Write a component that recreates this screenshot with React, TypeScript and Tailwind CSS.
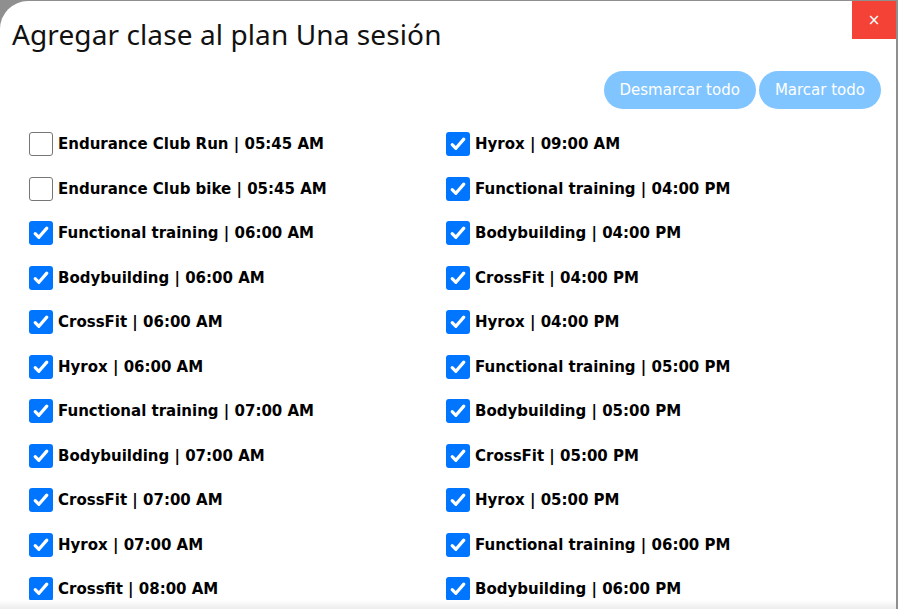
import { useState } from "react";

const left = [
    { label: "Endurance Club Run | 05:45 AM", on: false },
    { label: "Endurance Club bike | 05:45 AM", on: false },
    { label: "Functional training | 06:00 AM", on: true },
    { label: "Bodybuilding | 06:00 AM", on: true },
    { label: "CrossFit | 06:00 AM", on: true },
    { label: "Hyrox | 06:00 AM", on: true },
    { label: "Functional training | 07:00 AM", on: true },
    { label: "Bodybuilding | 07:00 AM", on: true },
    { label: "CrossFit | 07:00 AM", on: true },
    { label: "Hyrox | 07:00 AM", on: true },
    { label: "Crossfit | 08:00 AM", on: true },
];

const right = [
    { label: "Hyrox | 09:00 AM", on: true },
    { label: "Functional training | 04:00 PM", on: true },
    { label: "Bodybuilding | 04:00 PM", on: true },
    { label: "CrossFit | 04:00 PM", on: true },
    { label: "Hyrox | 04:00 PM", on: true },
    { label: "Functional training | 05:00 PM", on: true },
    { label: "Bodybuilding | 05:00 PM", on: true },
    { label: "CrossFit | 05:00 PM", on: true },
    { label: "Hyrox | 05:00 PM", on: true },
    { label: "Functional training | 06:00 PM", on: true },
    { label: "Bodybuilding | 06:00 PM", on: true },
];

const Box = ({ checked, onClick }: { checked: boolean; onClick: () => void }) => (
    <span
        onClick={onClick}
        className={
            checked
                ? "flex h-6 w-6 shrink-0 items-center justify-center rounded-[3px] bg-[#0075ff]"
                : "flex h-6 w-6 shrink-0 items-center justify-center rounded-[3px] border border-[#767676] bg-white"
        }
    >
        {checked && (
            <svg width="18" height="18" viewBox="0 0 18 18">
                <path d="M3.2 9.6l3.7 3.7 7.9-9.2" fill="none" stroke="#fff" strokeWidth="3.2" strokeLinecap="round" strokeLinejoin="round" />
            </svg>
        )}
    </span>
);

export default function App() {
    const [items, setItems] = useState(() => [...left, ...right].map(i => i.on));
    const toggle = (idx: number) => setItems(s => s.map((v, i) => (i === idx ? !v : v)));

    const col = (list: typeof left, offset: number) => (
        <div className="flex flex-col">
            {list.map((it, i) => (
                <label key={it.label} className="flex h-[44.5px] items-center gap-[5px]">
                    <Box checked={items[offset + i]} onClick={() => toggle(offset + i)} />
                    <span className="text-[15px] font-bold text-black" style={{ fontFamily: '"DejaVu Sans", sans-serif' }}>
                        {it.label}
                    </span>
                </label>
            ))}
        </div>
    );

    return (
        <div className="h-[609px] w-[898px] overflow-hidden bg-[#8f8f8f] pt-px pr-[2px]">
            <div className="relative flex h-full flex-col rounded-tl-[28px] bg-white">
                {/* close */}
                <button className="absolute right-0 top-0 flex h-[38px] w-[44px] items-center justify-center bg-[#f44336] text-[15px] text-white" style={{ fontFamily: '"DejaVu Sans", sans-serif' }}>
                    ×
                </button>

                <h1 className="pl-3 pt-[13px] text-[28px] leading-[40px] tracking-[0.1px] text-[#111]" style={{ fontFamily: '"Noto Sans", sans-serif' }}>
                    Agregar clase al plan Una sesión
                </h1>

                <div className="mt-[17px] flex justify-end gap-[3px] pr-[15px]" style={{ fontFamily: '"DejaVu Sans", sans-serif' }}>
                    <button className="h-[38px] rounded-full bg-[#80c5ff] px-4 text-[15px] text-white">Desmarcar todo</button>
                    <button className="h-[38px] rounded-full bg-[#80c5ff] px-4 text-[15px] text-white">Marcar todo</button>
                </div>

                <div className="mt-[13px] grid grid-cols-[417px_1fr] pl-[29px]">
                    {col(left, 0)}
                    {col(right, left.length)}
                </div>

                <div className="absolute bottom-0 left-0 right-0 h-[9px] bg-gradient-to-b from-white to-[#ececec]" />
            </div>
        </div>
    );
}
